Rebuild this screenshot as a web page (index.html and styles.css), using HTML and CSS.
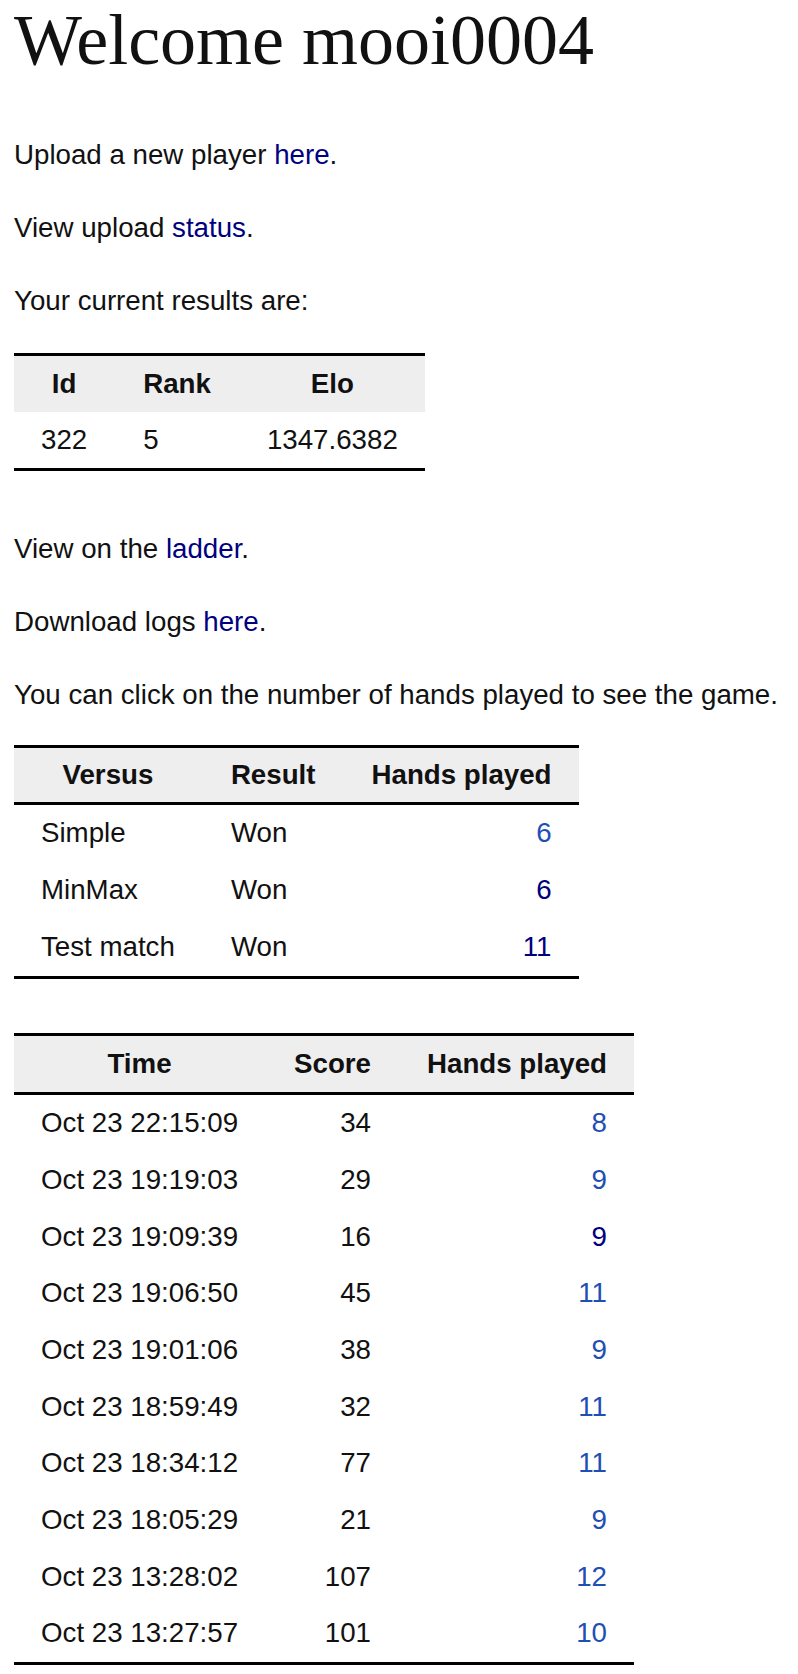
FILE: index.html
```html
<!DOCTYPE html>
<html>
<head>
<meta charset="utf-8">
<title>Welcome mooi0004</title>
<link rel="stylesheet" href="styles.css">
</head>
<body>
<div class="page">
  <h1 class="title">Welcome mooi0004</h1>
  <p class="line">Upload a new player <a class="link" href="#">here</a>.</p>
  <p class="line">View upload <a class="link" href="#">status</a>.</p>
  <p class="line">Your current results are:</p>
  <table class="grid grid-plain">
    <thead>
      <tr><th>Id</th><th>Rank</th><th>Elo</th></tr>
    </thead>
    <tbody>
      <tr><td>322</td><td>5</td><td>1347.6382</td></tr>
    </tbody>
  </table>
  <p class="line">View on the <a class="link" href="#">ladder</a>.</p>
  <p class="line">Download logs <a class="link" href="#">here</a>.</p>
  <p class="line">You can click on the number of hands played to see the game.</p>
  <table class="grid grid-versus">
    <thead>
      <tr><th>Versus</th><th>Result</th><th>Hands played</th></tr>
    </thead>
    <tbody>
      <tr><td>Simple</td><td>Won</td><td class="num"><a class="link link-blue" href="#">6</a></td></tr>
      <tr><td>MinMax</td><td>Won</td><td class="num"><a class="link" href="#">6</a></td></tr>
      <tr><td>Test match</td><td>Won</td><td class="num"><a class="link" href="#">11</a></td></tr>
    </tbody>
  </table>
  <table class="grid">
    <thead>
      <tr><th>Time</th><th class="num">Score</th><th class="num">Hands played</th></tr>
    </thead>
    <tbody>
      <tr><td>Oct 23 22:15:09</td><td class="num">34</td><td class="num"><a class="link link-blue" href="#">8</a></td></tr>
      <tr><td>Oct 23 19:19:03</td><td class="num">29</td><td class="num"><a class="link link-blue" href="#">9</a></td></tr>
      <tr><td>Oct 23 19:09:39</td><td class="num">16</td><td class="num"><a class="link" href="#">9</a></td></tr>
      <tr><td>Oct 23 19:06:50</td><td class="num">45</td><td class="num"><a class="link link-blue" href="#">11</a></td></tr>
      <tr><td>Oct 23 19:01:06</td><td class="num">38</td><td class="num"><a class="link link-blue" href="#">9</a></td></tr>
      <tr><td>Oct 23 18:59:49</td><td class="num">32</td><td class="num"><a class="link link-blue" href="#">11</a></td></tr>
      <tr><td>Oct 23 18:34:12</td><td class="num">77</td><td class="num"><a class="link link-blue" href="#">11</a></td></tr>
      <tr><td>Oct 23 18:05:29</td><td class="num">21</td><td class="num"><a class="link link-blue" href="#">9</a></td></tr>
      <tr><td>Oct 23 13:28:02</td><td class="num">107</td><td class="num"><a class="link link-blue" href="#">12</a></td></tr>
      <tr><td>Oct 23 13:27:57</td><td class="num">101</td><td class="num"><a class="link link-blue" href="#">10</a></td></tr>
    </tbody>
  </table>
</div>
</body>
</html>
```
FILE: styles.css
```css
html, body {
  margin: 0;
  padding: 0;
  background: #ffffff;
}

.page {
  padding: 0 14px;
  font-family: "Liberation Sans", Arial, Helvetica, sans-serif;
  font-size: 27.7px;
  line-height: 44.8px;
  color: #111111;
}

.title {
  margin: 0 0 53px;
  font-family: "Liberation Serif", "Times New Roman", serif;
  font-weight: normal;
  font-size: 72px;
  line-height: 80px;
  color: #111111;
}

.line {
  margin: 28px 0;
}

.title + .line {
  margin-top: 0;
}

.link {
  color: #000080;
  text-decoration: none;
}

.link-blue {
  color: #1f4fb4;
}

.grid {
  border-collapse: collapse;
  border-top: 3px solid #000;
  border-bottom: 3px solid #000;
  margin: 28px 0 56px;
}

.grid-plain {
  margin-top: 30px;
}

.grid-versus {
  margin-bottom: 54px;
}

.grid thead tr {
  background: #eeeeee;
  border-bottom: 3px solid #000;
}

.grid-plain thead tr {
  border-bottom: 0;
}

.grid th,
.grid td {
  padding: 5.95px 28px;
  text-align: left;
  vertical-align: middle;
  white-space: nowrap;
}

.grid-plain th,
.grid-plain td {
  padding: 5.5px 28px;
}

.grid-versus th {
  padding: 4.5px 28px;
}

.grid-versus td {
  padding: 6px 28px;
}

.grid th {
  font-weight: bold;
  text-align: center;
}

.grid th:first-child,
.grid td:first-child {
  padding-left: 27px;
}

.grid th:last-child,
.grid td:last-child {
  padding-right: 27px;
}

.grid .num {
  text-align: right;
}
```
